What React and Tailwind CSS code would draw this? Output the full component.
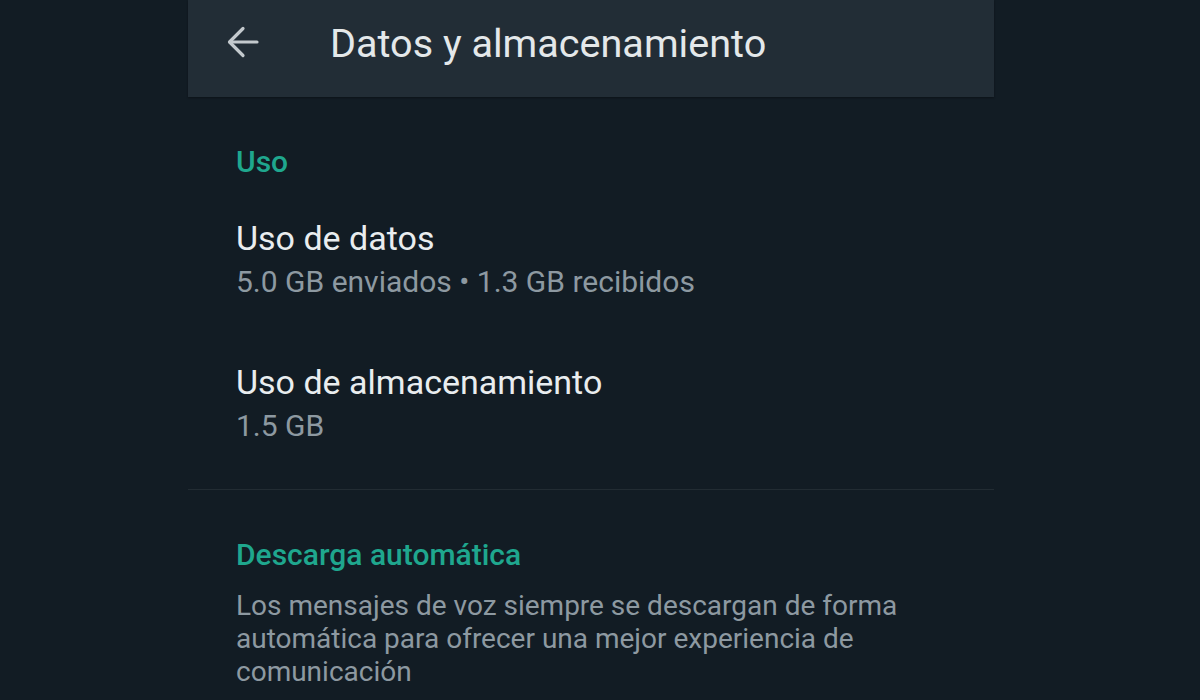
function BackArrow() {
  return (
    <svg width="32" height="32" viewBox="0 0 32 32" fill="none" stroke="#c3c9cd" strokeWidth="3.2" strokeLinecap="round" strokeLinejoin="round">
      <path d="M3 16h27" />
      <path d="M16 2.5 2.5 16 16 29.5" />
    </svg>
  );
}

function Item({ title, sub }) {
  return (
    <div className="flex flex-col">
      <span className="text-[34px] leading-[44px] text-[#e9edef]">{title}</span>
      <span className="text-[30px] leading-[44px] text-[#8d99a1]">{sub}</span>
    </div>
  );
}

export default function App() {
  return (
    <div className="w-[1200px] h-[700px] overflow-hidden bg-[#121c24] flex justify-center font-['Roboto',sans-serif]">
      <div className="w-[806px] ml-[-18px] flex flex-col">
        <header className="h-[97px] pb-[10px] bg-[#222d36] flex items-center shadow-[0_1px_2px_rgba(0,0,0,0.35)]">
          <div className="ml-[39px] mb-[3px]">
            <BackArrow />
          </div>
          <h1 className="ml-[71px] text-[39.6px] font-normal text-[#e4e8ea]">
            Datos y almacenamiento
          </h1>
        </header>

        <section className="pl-[48px] pt-[48px]">
          <h2 className="text-[30px] leading-[34px] font-medium text-[#1fa78e]">Uso</h2>
          <div className="mt-[37px] flex flex-col gap-[56px]">
            <Item title="Uso de datos" sub="5.0 GB enviados • 1.3 GB recibidos" />
            <Item title="Uso de almacenamiento" sub="1.5 GB" />
          </div>
        </section>

        <div className="mt-[41px] h-px bg-[#222c33]" />

        <section className="pl-[48px] pt-[48px]">
          <h2 className="text-[30px] leading-[34px] font-medium text-[#1fa78e]">Descarga automática</h2>
          <p className="mt-[17px] w-[720px] text-[28px] leading-[33px] text-[#8d99a1]">
            Los mensajes de voz siempre se descargan de forma automática para ofrecer una mejor experiencia de comunicación
          </p>
        </section>
      </div>
    </div>
  );
}
